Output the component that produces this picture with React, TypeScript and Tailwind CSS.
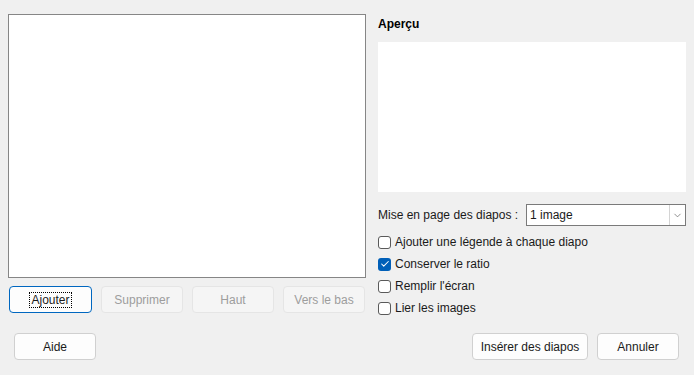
import { Check, ChevronDown } from 'lucide-react';

const font = { fontFamily: '"Segoe UI", "Liberation Sans", Arial, sans-serif' };

function Checkbox({ label, checked = false }: { label: string; checked?: boolean }) {
  return (
    <label className="flex h-[22px] items-center gap-[4px]">
      {checked ? (
        <span className="flex h-[13px] w-[13px] items-center justify-center rounded-[3px] bg-[#005fb8]">
          <Check className="h-[10px] w-[10px] text-white" strokeWidth={2.5} />
        </span>
      ) : (
        <span className="h-[13px] w-[13px] rounded-[3px] border border-[#5a5a5a] bg-white" />
      )}
      <span>{label}</span>
    </label>
  );
}

function Button({ label, disabled = false, focused = false, className = '' }: { label: string; disabled?: boolean; focused?: boolean; className?: string }) {
  if (disabled) {
    return (
      <div className={`flex h-[27px] items-center justify-center rounded-[4px] border border-[#e5e5e5] bg-[#f5f5f5] text-[#9d9d9d] ${className}`}>
        {label}
      </div>
    );
  }
  if (focused) {
    return (
      <div className={`flex h-[27px] items-center justify-center rounded-[4px] border-[1.5px] border-[#0067c0] bg-[#fdfdfd] text-[#1a1a1a] ${className}`}>
        <span className="border border-dotted border-black px-[1px] leading-[14px]">{label}</span>
      </div>
    );
  }
  return (
    <div className={`flex h-[27px] items-center justify-center rounded-[4px] border border-[#d0d0d0] bg-[#fdfdfd] text-[#1a1a1a] ${className}`}>
      {label}
    </div>
  );
}

export default function App() {
  return (
    <div className="flex h-[375px] w-[694px] flex-col bg-[#f0f0f0] text-[12px] text-[#1a1a1a]" style={font}>
      <div className="flex h-[333px] pl-[8px] pt-[14px]">
        <div className="w-[358px]">
          <div className="h-[264px] border border-[#868686] bg-white" />
          <div className="mt-[8px] flex gap-[9px] pl-[1px]">
            <Button label="Ajouter" focused className="w-[83px]" />
            <Button label="Supprimer" disabled className="w-[82px]" />
            <Button label="Haut" disabled className="w-[82px]" />
            <Button label="Vers le bas" disabled className="w-[82px]" />
          </div>
        </div>
        <div className="ml-[12px] w-[308px]">
          <div className="mt-[2px] h-[16px] font-bold leading-[16px] text-black">Aperçu</div>
          <div className="mt-[10px] h-[150px] bg-white" />
          <div className="mt-[12px] flex h-[22px] items-center justify-between">
            <span>Mise en page des diapos :</span>
            <div className="flex h-[22px] w-[160px] items-center border border-[#7a7a7a] bg-white">
              <span className="flex-1 pl-[3px]">1 image</span>
              <span className="flex h-[20px] w-[16px] items-center justify-center border-l border-[#d4d4d4]">
                <ChevronDown className="h-[11px] w-[11px] text-[#606060]" strokeWidth={1.5} />
              </span>
            </div>
          </div>
          <div className="mt-[5px] flex flex-col">
            <Checkbox label="Ajouter une légende à chaque diapo" />
            <Checkbox label="Conserver le ratio" checked />
            <Checkbox label="Remplir l'écran" />
            <Checkbox label="Lier les images" />
          </div>
        </div>
      </div>
      <div className="flex pl-[14px] pr-[15px]">
        <Button label="Aide" className="w-[82px]" />
        <div className="flex-1" />
        <Button label="Insérer des diapos" className="w-[116px]" />
        <Button label="Annuler" className="ml-[9px] w-[82px]" />
      </div>
    </div>
  );
}
